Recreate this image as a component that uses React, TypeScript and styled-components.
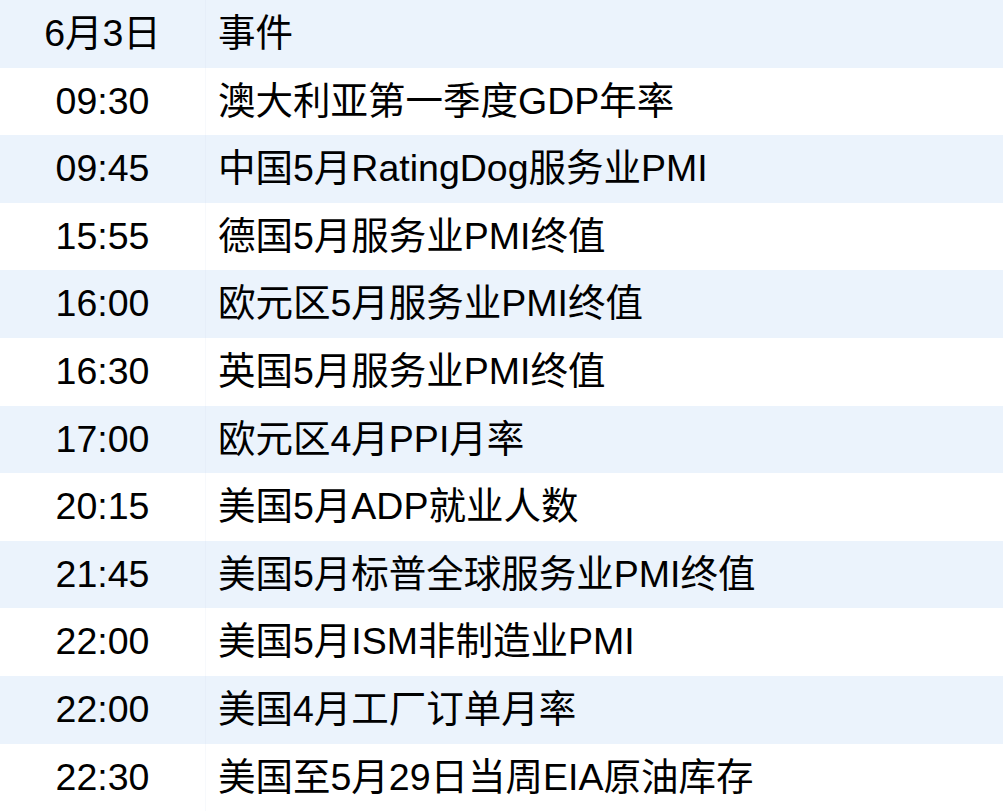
import React from "react";
import styled, { createGlobalStyle } from "styled-components";

const G = createGlobalStyle`
  body { margin: 0; background: #fff; }
`;
const Table = styled.div`
  width: 1003px;
  font-family: "Liberation Sans", "Noto Sans CJK SC", sans-serif;
  font-size: 37.5px;
  line-height: 1;
  color: #000;
`;
const Row = styled.div<{ $alt: boolean }>`
  display: grid;
  grid-template-columns: 206px 1fr;
  height: 67.6px;
  align-items: center;
  background: ${(p) => (p.$alt ? "#ebf3fc" : "#fff")};
`;
const Time = styled.div`
  height: 100%;
  display: flex;
  align-items: center;
  justify-content: center;
  border-right: 1px solid rgba(200, 215, 235, 0.15);
`;
const Ev = styled.div`
  padding-left: 12px;
  white-space: nowrap;
`;

const rows: [string, string][] = [
  ["6月3日", "事件"],
  ["09:30", "澳大利亚第一季度GDP年率"],
  ["09:45", "中国5月RatingDog服务业PMI"],
  ["15:55", "德国5月服务业PMI终值"],
  ["16:00", "欧元区5月服务业PMI终值"],
  ["16:30", "英国5月服务业PMI终值"],
  ["17:00", "欧元区4月PPI月率"],
  ["20:15", "美国5月ADP就业人数"],
  ["21:45", "美国5月标普全球服务业PMI终值"],
  ["22:00", "美国5月ISM非制造业PMI"],
  ["22:00", "美国4月工厂订单月率"],
  ["22:30", "美国至5月29日当周EIA原油库存"],
];

export default function App() {
  return (
    <Table>
      <G />
      {rows.map(([t, e], i) => (
        <Row key={i} $alt={i % 2 === 0}>
          <Time>{t}</Time>
          <Ev>{e}</Ev>
        </Row>
      ))}
    </Table>
  );
}
